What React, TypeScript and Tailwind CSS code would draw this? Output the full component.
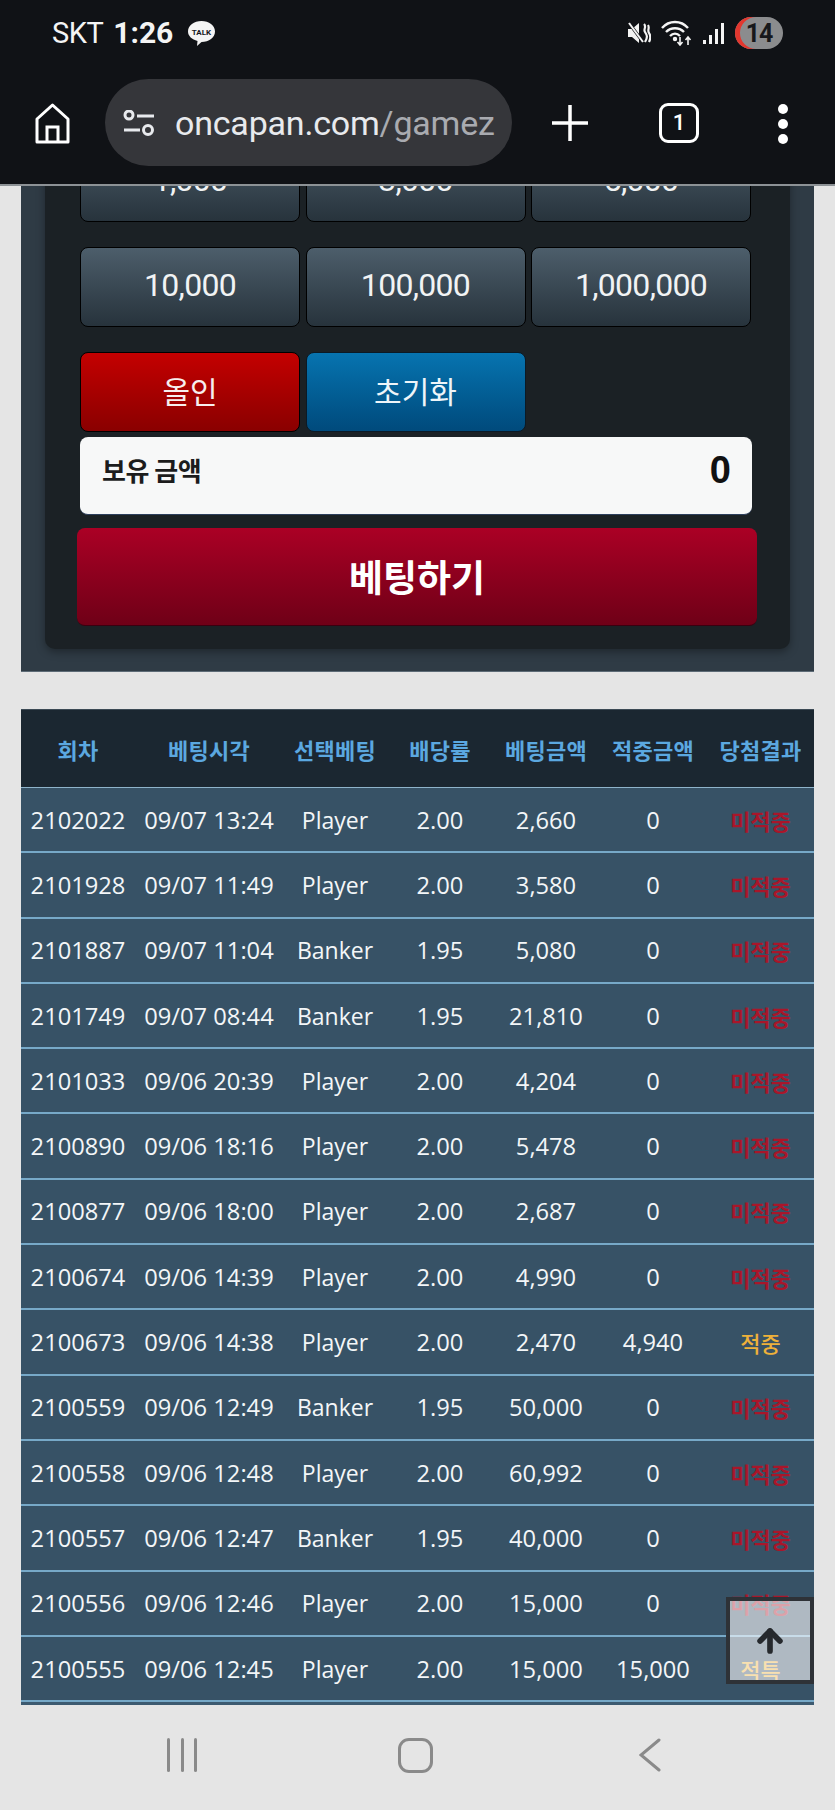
import { ArrowUp } from "lucide-react";

const cjk = "font-['Noto_Sans_CJK_KR',sans-serif]";

const headers = ["회차", "베팅시각", "선택베팅", "배당률", "베팅금액", "적중금액", "당첨결과"];

const rows = [
  ["2102022", "09/07 13:24", "Player", "2.00", "2,660", "0", "미적중"],
  ["2101928", "09/07 11:49", "Player", "2.00", "3,580", "0", "미적중"],
  ["2101887", "09/07 11:04", "Banker", "1.95", "5,080", "0", "미적중"],
  ["2101749", "09/07 08:44", "Banker", "1.95", "21,810", "0", "미적중"],
  ["2101033", "09/06 20:39", "Player", "2.00", "4,204", "0", "미적중"],
  ["2100890", "09/06 18:16", "Player", "2.00", "5,478", "0", "미적중"],
  ["2100877", "09/06 18:00", "Player", "2.00", "2,687", "0", "미적중"],
  ["2100674", "09/06 14:39", "Player", "2.00", "4,990", "0", "미적중"],
  ["2100673", "09/06 14:38", "Player", "2.00", "2,470", "4,940", "적중"],
  ["2100559", "09/06 12:49", "Banker", "1.95", "50,000", "0", "미적중"],
  ["2100558", "09/06 12:48", "Player", "2.00", "60,992", "0", "미적중"],
  ["2100557", "09/06 12:47", "Banker", "1.95", "40,000", "0", "미적중"],
  ["2100556", "09/06 12:46", "Player", "2.00", "15,000", "0", "미적중"],
  ["2100555", "09/06 12:45", "Player", "2.00", "15,000", "15,000", "적특"],
];

const gridCols = "grid grid-cols-[114px_148px_104px_106px_106px_108px_107px] items-center";

function StatusBar() {
  return (
    <div className="flex h-[66px] items-center pl-[52px] pr-[52px] text-[#f4f4f4]">
      <span className="font-['Roboto',sans-serif] text-[29px] leading-none tracking-[-0.5px]">SKT</span>
      <span className="ml-[10px] font-['Roboto',sans-serif] text-[30px] font-bold leading-none">1:26</span>
      <svg className="ml-[14px]" width="29" height="27" viewBox="0 0 29 27">
        <path d="M14.5 1C22 1 28 5.500 28 11.500S22 22 14.500 22L10 26l.5-5C5 19.500 1 16 1 11.500 1 5.500 7 1 14.500 1z" fill="#f4f4f4" />
        <text x="14.500" y="14.500" textAnchor="middle" fontSize="8" fontWeight="700" fill="#15171b" fontFamily="Roboto">TALK</text>
      </svg>
      <div className="ml-auto flex items-center">
        <svg width="24" height="22" viewBox="0 0 24 22" fill="none">
          <path d="M1 7h4l7-6v20l-7-6H1z" fill="#f4f4f4" />
          <path d="M2 1l14 19" stroke="#101216" strokeWidth="3" />
          <path d="M2 1l14 19" stroke="#f4f4f4" strokeWidth="2" />
          <path d="M17 2c3 3-1 5 1 8s3 5 0 10M21 3c2 3-1 5 1 8s2 5 0 9" stroke="#f4f4f4" strokeWidth="2.200" />
        </svg>
        <svg className="ml-[10px]" width="32" height="26" viewBox="0 0 32 26" fill="none" stroke="#f4f4f4" strokeWidth="2.400">
          <path d="M1 8C8 0 20 0 27 8" />
          <path d="M5 12c5-5 13-5 18 0" />
          <path d="M9 16c3-3 7-3 10 0" />
          <circle cx="14" cy="19" r="1" fill="#f4f4f4" />
          <path d="M19 17v8M16.500 22l2.500 3 2.500-3M27 25v-8M24.500 20l2.500-3 2.500 3" strokeWidth="1.600" />
        </svg>
        <div className="ml-[10px] flex h-[22px] items-end gap-[3px]">
          <div className="h-[4px] w-[3px] bg-[#f4f4f4]" />
          <div className="h-[9px] w-[3px] bg-[#f4f4f4]" />
          <div className="h-[15px] w-[3px] bg-[#f4f4f4]" />
          <div className="h-[21px] w-[3px] bg-[#f4f4f4]" />
        </div>
        <div className="ml-[11px] flex h-[32px] w-[48px] items-center justify-center overflow-hidden rounded-full bg-[#8b8c8e] font-['Roboto',sans-serif] text-[25px] font-bold leading-none tracking-[-1px] text-[#17181b] shadow-[inset_5px_0_0_#e2372f]">
          14
        </div>
      </div>
    </div>
  );
}

function Toolbar() {
  return (
    <div className="flex h-[118px] items-start pt-[13px]">
      <svg className="ml-[35px] mt-[24px]" width="35" height="41" viewBox="0 0 35 41" fill="none" stroke="#fff" strokeWidth="3">
        <path d="M2 39V16L17.500 2 33 16v23z" strokeLinejoin="round" />
        <path d="M12 39V24h11v15" />
      </svg>
      <div className="ml-[35px] flex h-[87px] w-[407px] items-center rounded-full bg-[#35363a] pl-[18px]">
        <svg width="32" height="26" viewBox="0 0 32 26" fill="none" stroke="#e8eaed" strokeWidth="3">
          <circle cx="6" cy="5" r="4" />
          <path d="M14 6h17M1 20h16" />
          <circle cx="25" cy="20" r="4.500" />
        </svg>
        <div className="ml-[20px] w-[321px] overflow-hidden whitespace-nowrap font-['Roboto',sans-serif] text-[34px] leading-[40px] tracking-[-0.2px] text-[#e8eaed]">
          oncapan.com<span className="text-[#a9abb0]">/gamez</span>
        </div>
      </div>
      <svg className="ml-[40px] mt-[26px]" width="36" height="36" viewBox="0 0 36 36" stroke="#fff" strokeWidth="3.500">
        <path d="M18 0v36M0 18h36" />
      </svg>
      <div className="ml-[71px] mt-[24px] flex h-[40px] w-[40px] items-center justify-center rounded-[9px] border-[3px] border-white font-['Roboto',sans-serif] text-[22px] font-medium leading-none text-white">
        1
      </div>
      <div className="ml-[79px] mt-[25px] flex flex-col gap-[5px]">
        <div className="size-[10px] rounded-full bg-white" />
        <div className="size-[10px] rounded-full bg-white" />
        <div className="size-[10px] rounded-full bg-white" />
      </div>
    </div>
  );
}

function AmountButton({ label }: { label: string }) {
  return (
    <button className="flex h-[80px] items-center justify-center rounded-[8px] border border-black bg-gradient-to-b from-[#4d5e6b] to-[#27333c] pb-[4px] font-['Roboto',sans-serif] text-[32px] leading-[36px] tracking-[-0.7px] text-[#f1f3f4]">
      {label}
    </button>
  );
}

function BetPanel() {
  return (
    <section className="mx-[21px] h-[530px] border-b border-[#5d6b76] bg-[#2f3b45] px-[24px]">
      <div className="h-[507px] rounded-b-[10px] bg-[#1b2125] px-[35px] shadow-[0_3px_8px_rgba(0,0,0,0.35)]">
        <div className="grid grid-cols-[220px_220px_220px] gap-x-[5.5px] gap-y-[25px]">
          <AmountButton label="1,000" />
          <AmountButton label="3,000" />
          <AmountButton label="5,000" />
          <AmountButton label="10,000" />
          <AmountButton label="100,000" />
          <AmountButton label="1,000,000" />
        </div>
        <div className="mt-[25px] grid grid-cols-[220px_220px] gap-x-[5.5px]">
          <button className={`flex h-[80px] items-center justify-center rounded-[8px] border border-black bg-gradient-to-b from-[#c40000] to-[#8a0000] pb-[4px] text-[30px] leading-[36px] text-[#f7eeee] ${cjk}`}>
            올인
          </button>
          <button className={`flex h-[80px] items-center justify-center rounded-[8px] border border-[#0b1a26] bg-gradient-to-b from-[#0774b0] to-[#004a7c] pb-[4px] text-[30px] leading-[36px] text-[#eef5f9] ${cjk}`}>
            초기화
          </button>
        </div>
        <div className="mt-[5px] flex h-[78px] w-[672px] items-start justify-between rounded-[8px] border-b border-[#2d3f5c] bg-[#f7f8f8] pl-[22px] pr-[21px]">
          <span className={`mt-[17px] text-[26px] font-bold leading-[32px] tracking-[-0.5px] text-[#1c1c1c] ${cjk}`}>보유 금액</span>
          <span className="mt-[11px] font-['Liberation_Sans',sans-serif] text-[38px] font-bold leading-[44px] text-[#111]">0</span>
        </div>
        <button className={`-ml-[3px] mt-[13px] flex h-[98px] w-[680px] items-center justify-center rounded-[8px] border-b border-[#3a0010] bg-gradient-to-b from-[#ab0025] to-[#6f0017] pb-[2px] text-[37px] font-bold leading-[44px] text-white ${cjk}`}>
          베팅하기
        </button>
      </div>
    </section>
  );
}

function HistoryTable() {
  return (
    <section className="mx-[21px] mt-[37px]">
      <div className={`${gridCols} h-[78px] border-t border-[#3c4a55] bg-[#1b2731] ${cjk} text-center text-[22px] font-bold leading-[28px] tracking-[0.2px] text-[#5ba8e0]`}>
        {headers.map((h) => (
          <div key={h}>{h}</div>
        ))}
      </div>
      <div className="border-t border-[#8fb4cb]">
        {rows.map((r) => (
          <div
            key={r[0]}
            className={`${gridCols} h-[65.3px] border-b-2 border-[#77a9c8] bg-[#375266] text-center font-['Open_Sans','Noto_Sans_CJK_KR',sans-serif] text-[23.7px] leading-[30px] text-[#f3f6f8]`}
          >
            {r.slice(0, 6).map((v, i) => (
              <div key={i} className={i === 2 ? "whitespace-nowrap text-[23px]" : "whitespace-nowrap"}>
                {v}
              </div>
            ))}
            <div
              className={
                r[6] === "미적중"
                  ? `${cjk} text-[22px] font-bold text-[#a9162a]`
                  : `${cjk} text-[22px] font-medium text-[#eeb13a]`
              }
            >
              {r[6]}
            </div>
          </div>
        ))}
        <div className="h-[10px] bg-[#3d5a70]" />
      </div>
    </section>
  );
}

function NavBar() {
  return (
    <nav className="relative z-10 flex h-[105px] items-start bg-[#e5e5e5] pl-[167px] pt-[33px]">
      <div className="flex h-[34px] w-[30px] justify-between">
        <div className="w-[3px] rounded-full bg-[#8a8a8a]" />
        <div className="w-[3px] rounded-full bg-[#8a8a8a]" />
        <div className="w-[3px] rounded-full bg-[#8a8a8a]" />
      </div>
      <div className="ml-[201px] size-[35px] rounded-[11px] border-[3px] border-[#8a8a8a]" />
      <svg className="ml-[206px]" width="22" height="34" viewBox="0 0 22 34" fill="none" stroke="#8a8a8a" strokeWidth="3" strokeLinecap="round">
        <path d="M20 2L2 17l18 15" />
      </svg>
    </nav>
  );
}

export default function App() {
  return (
    <div className="relative flex h-[1810px] w-[835px] flex-col overflow-hidden bg-[#e5e5e5]">
      <header className="relative z-10 h-[186px] border-b-2 border-[#8d9296] bg-[#101216]">
        <StatusBar />
        <Toolbar />
      </header>
      <main className="-mt-[44px] flex-1 overflow-hidden">
        <BetPanel />
        <HistoryTable />
      </main>
      <NavBar />
      <button className="absolute left-[726px] top-[1597px] z-20 flex h-[87px] w-[88px] items-center justify-center border-4 border-[#2e3237] bg-white/60">
        <ArrowUp className="text-[#26292d]" size={34} strokeWidth={4} />
      </button>
    </div>
  );
}
